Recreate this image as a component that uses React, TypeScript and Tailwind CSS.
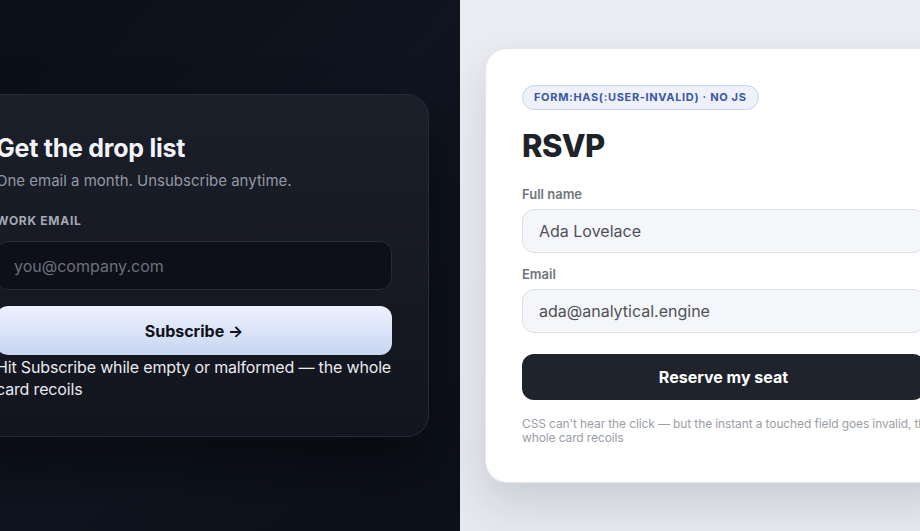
import {FC} from 'react'

const DropListCard: FC = () => {
  return (
    <div className="ml-[-41px] w-[470px] rounded-[22px] border border-[#262b38] bg-gradient-to-b from-[#1b1f2a] to-[#12151d] px-9 pt-[37px] pb-9 shadow-[0_30px_60px_rgba(0,0,0,0.45)]">
      <h2 className="text-[25px] font-bold leading-8 tracking-[-0.01em] text-[#f3f4f8]">Get the drop list</h2>
      <p className="mt-[7px] text-[15px] leading-5 text-[#9299a6]">One email a month. Unsubscribe anytime.</p>
      <label className="mt-[22px] block text-[12px] font-bold leading-4 tracking-[0.06em] text-[#a3a9b5]">WORK EMAIL</label>
      <div className="mt-[12px] flex h-[49px] items-center rounded-[12px] border border-[#272c3a] bg-[#0d1018] px-[17px] text-[16px] text-[#6b717d]">
        you@company.com
      </div>
      <button className="mt-4 flex h-[49px] w-full items-center justify-center rounded-[12px] bg-gradient-to-b from-[#eef2fd] to-[#c8d5f1] text-[16px] font-bold text-[#0f1218]">
        Subscribe →
      </button>
      <p className="mt-[1px] text-[16px] leading-[22px] tracking-[-0.01em] text-[#e8eaef]">
        Hit Subscribe while empty or malformed — the whole card recoils
      </p>
    </div>
  )
}

const RsvpCard: FC = () => {
  return (
    <div className="ml-[25px] w-[477px] rounded-[22px] border border-[#e3e6eb] bg-white px-9 pt-[34px] pb-[37px] shadow-[0_18px_40px_rgba(30,40,60,0.14)]">
      <span className="inline-flex h-[25px] items-center rounded-full border border-[#c6d1ea] bg-[#eef1f9] px-[11px] text-[11px] font-bold tracking-[0.06em] text-[#3a58a8]">
        FORM:HAS(:USER-INVALID) · NO JS
      </span>
      <h1 className="mt-[16px] text-[31px] font-extrabold leading-10 tracking-[-0.02em] text-[#1e2229]">RSVP</h1>
      <label className="mt-[20px] block text-[13px] font-semibold leading-4 text-[#70757e]">Full name</label>
      <div className="mt-[7px] flex h-[44px] items-center rounded-[12px] border border-[#dcdfe6] bg-[#f5f6f9] px-4 text-[16px] text-[#4d5159]">
        Ada Lovelace
      </div>
      <label className="mt-[13px] block text-[13px] font-semibold leading-4 text-[#70757e]">Email</label>
      <div className="mt-[7px] flex h-[44px] items-center rounded-[12px] border border-[#dcdfe6] bg-[#f5f6f9] px-4 text-[16px] text-[#4d5159]">
        ada@analytical.engine
      </div>
      <button className="mt-[21px] flex h-[46px] w-full items-center justify-center rounded-[12px] bg-[#1f232b] text-[16px] font-bold text-white">
        Reserve my seat
      </button>
      <p className="mr-[-30px] mt-[17px] text-[12px] leading-[14px] tracking-[-0.01em] text-[#9a9ea6]">
        CSS can't hear the click — but the instant a touched field goes invalid, the whole card recoils
      </p>
    </div>
  )
}

export default function App() {
  return (
    <div className="flex h-[531px] w-[920px] overflow-hidden font-['Inter',sans-serif]">
      <div className="h-full w-[460px] shrink-0 overflow-hidden bg-gradient-to-br from-[#0b0f17] via-[#0f1420] to-[#0c1019] pt-[94px]">
        <DropListCard/>
      </div>
      <div className="h-full w-[460px] shrink-0 overflow-hidden bg-gradient-to-b from-[#ebedf2] to-[#e5e8ed] pt-[48px]">
        <RsvpCard/>
      </div>
    </div>
  )
}
